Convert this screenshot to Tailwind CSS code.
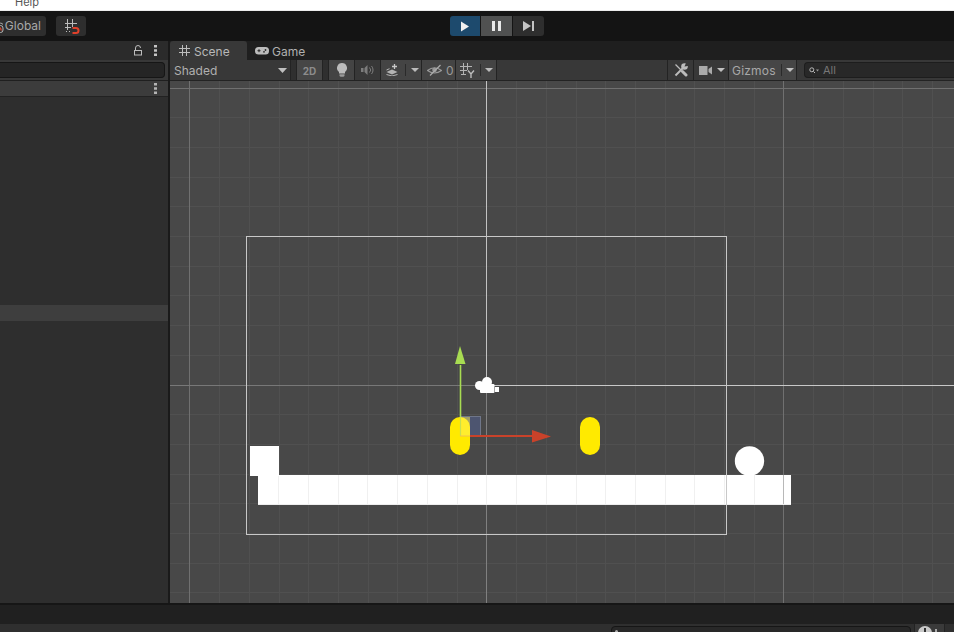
<!DOCTYPE html>
<html>
<head>
<meta charset="utf-8">
<script src="https://cdn.jsdelivr.net/npm/@tailwindcss/browser@4"></script>
</head>
<body class="bg-[#1a1a1a]">
<div class="w-[954px] h-[632px] overflow-hidden flex flex-col font-['Inter','Liberation_Sans',sans-serif] text-[12px] text-[#b4b4b4]">
  <!-- menu -->
  <div class="h-[11px] shrink-0 bg-white border-b border-[#ececec] overflow-hidden relative pl-[15px]">
    <span class="block -mt-[5px] text-[11px] leading-[14px] text-[#555]">Help</span>
  </div>
  <!-- main toolbar -->
  <div class="h-[30px] shrink-0 bg-[#141414] relative flex items-center">
    <div class="w-[46px] h-[20px] bg-[#2e2e2e] rounded-r-[3px] flex items-center justify-end pr-[5px] text-[#a8a8a8] gap-[1px] overflow-hidden">
      <svg width="6" height="13" viewBox="0 0 6 13" class="shrink-0"><path d="M0 4.500a3 3 0 0 1 5 0M0 8a2.500 2.500 0 0 1 5 0v2a2.500 2.500 0 0 1-5 0" fill="none" stroke="#b4b4b4" stroke-width="1"/><path d="M0 7.500a2.500 2.500 0 0 1 3 3" fill="none" stroke="#d8452c" stroke-width="1.400"/></svg>
      <span>Global</span>
    </div>
    <div class="ml-[10px] w-[30px] h-[20px] bg-[#2e2e2e] rounded-[3px] flex items-center justify-center">
      <svg width="18" height="16" viewBox="0 0 18 16" fill="none"><path d="M5.500 1v11M10.500 1v8M3 5.500h12M3 9.500h6" stroke="#bcbcbc" stroke-width="1"/><path d="M4 13.500h1M7 13.500h1" stroke="#bcbcbc"/><path d="M10.500 10h3.500a2.500 2.500 0 0 1 0 5h-3.500" stroke="#e0402a" stroke-width="2"/></svg>
    </div>
    <div class="absolute left-[450px] top-[5px] flex gap-[1px] h-[20px]">
      <div class="w-[30px] bg-[#1d4a6d] rounded-l-[3px] flex items-center justify-center">
        <svg width="10" height="11" viewBox="0 0 10 11"><path d="M1 .5 9 5.500 1 10.500z" fill="#f0f0f0"/></svg>
      </div>
      <div class="w-[31px] bg-[#505151] flex items-center justify-center">
        <svg width="9" height="10" viewBox="0 0 9 10"><path d="M0 0h3v10H0zM6 0h3v10H6z" fill="#e8e8e8"/></svg>
      </div>
      <div class="w-[31px] bg-[#2e2e2e] rounded-r-[3px] flex items-center justify-center">
        <svg width="11" height="10" viewBox="0 0 11 10"><path d="M0 0 8 5 0 10z" fill="#c4c4c4"/><path d="M9 0h2v10H9z" fill="#c4c4c4"/></svg>
      </div>
    </div>
  </div>
  <!-- panels -->
  <div class="h-[562px] shrink-0 flex bg-[#1a1a1a]">
    <!-- left panel -->
    <div class="w-[168px] shrink-0 flex flex-col bg-[#2e2e2e]">
      <div class="h-[19px] shrink-0 bg-[#2b2b2b] flex items-center justify-end gap-[11px] pr-[11px]">
        <svg width="10" height="11" viewBox="0 0 10 11" fill="none"><path d="M2.500 5V3a2.500 2.500 0 0 1 5 0" stroke="#bdbdbd"/><rect x="1.500" y="5.500" width="7" height="4.500" stroke="#bdbdbd"/></svg>
        <svg width="3" height="11" viewBox="0 0 3 11"><path d="M0 0h3v2.500H0zM0 4.200h3v2.500H0zM0 8.500h3V11H0z" fill="#c4c4c4"/></svg>
      </div>
      <div class="h-[21px] shrink-0 bg-[#383838] flex items-center pr-[3px] border-b border-[#1f1f1f]">
        <div class="w-full h-[16px] bg-[#252525] border border-[#161616] rounded-r-[4px] border-l-0"></div>
      </div>
      <div class="h-[16px] shrink-0 bg-[#3c3c3c] border-b border-[#222] flex items-center justify-end pr-[11px]">
        <svg width="3" height="11" viewBox="0 0 3 11"><path d="M0 0h3v2.500H0zM0 4.200h3v2.500H0zM0 8.500h3V11H0z" fill="#b4b4b4"/></svg>
      </div>
      <div class="h-[208px] shrink-0 bg-[#2e2e2e]"></div>
      <div class="h-[16px] shrink-0 bg-[#3e3e3e]"></div>
      <div class="flex-1 bg-[#2e2e2e]"></div>
    </div>
    <!-- scene panel -->
    <div class="ml-[2px] flex-1 flex flex-col min-w-0">
      <div class="h-[19px] shrink-0 bg-[#1f1f1f] flex items-end">
        <div class="w-[77px] h-[19px] bg-[#383838] rounded-t-[3px] flex items-center pl-[9px] gap-[4px] text-[#b8b8b8]">
          <svg width="11" height="11" viewBox="0 0 11 11" fill="none"><path d="M3.500 0v11M7.500 0v11M0 3.500h11M0 7.500h11" stroke="#bdbdbd"/></svg>
          <span class="mt-[2px]">Scene</span>
        </div>
        <div class="h-[19px] flex items-center pl-[8px] gap-[3px] text-[#b0b0b0]">
          <svg width="14" height="8" viewBox="0 0 14 8"><rect width="14" height="7.500" rx="3.500" fill="#bcbcbc"/><path d="M2.500 3.700h3M4 2.200v3" stroke="#2a2a2a"/><circle cx="10.500" cy="3" r=".9" fill="#2a2a2a"/><circle cx="9" cy="4.800" r=".9" fill="#2a2a2a"/></svg>
          <span class="mt-[2px]">Game</span>
        </div>
      </div>
      <!-- scene toolbar -->
      <div class="h-[21px] shrink-0 bg-[#383838] border-b border-[#232323] flex items-stretch">
        <div class="w-[120px] flex items-center justify-between pl-[4px] pr-[2px] text-[#b0b0b0]">
          <span class="mt-[2px]">Shaded</span>
          <svg width="9" height="5" viewBox="0 0 9 5" class="mr-[1px]"><path d="M0 0h9L4.500 5z" fill="#c0c0c0"/></svg>
        </div>
        <div class="w-[1px] bg-[#232323]"></div>
        <div class="w-[5px] bg-[#2f2f2f]"></div>
        <div class="w-[1px] bg-[#232323]"></div>
        <div class="w-[25px] bg-[#464646] flex items-center justify-center text-[10px] font-bold text-[#8c8c8c]"><span class="mt-[2px]">2D</span></div>
        <div class="w-[1px] bg-[#232323]"></div>
        <div class="w-[5px] bg-[#2f2f2f]"></div>
        <div class="w-[1px] bg-[#232323]"></div>
        <div class="w-[25px] bg-[#444] flex items-center justify-center">
          <svg width="10" height="14" viewBox="0 0 10 14"><path d="M5 0a5 5 0 0 1 3 9v1.500H2V9a5 5 0 0 1 3-9z" fill="#bbb"/><path d="M2.500 11.200h5v1a1.500 1.500 0 0 1-1.500 1.500H4a1.500 1.500 0 0 1-1.500-1.500z" fill="#999"/></svg>
        </div>
        <div class="w-[1px] bg-[#232323]"></div>
        <div class="w-[25px] bg-[#383838] flex items-center justify-center">
          <svg width="13" height="10" viewBox="0 0 13 10"><path d="M0 3h2.500v4H0zM3.500 3 6.500 0v10L3.500 7z" fill="#7c7c7c"/><path d="M8.500 2.500a3.500 3.500 0 0 1 0 5M10.500 1a6 6 0 0 1 0 8" stroke="#7c7c7c" fill="none"/></svg>
        </div>
        <div class="w-[1px] bg-[#232323]"></div>
        <div class="w-[40px] bg-[#444] flex items-center pl-[5px] gap-[6px]">
          <svg width="13" height="12" viewBox="0 0 13 12" fill="none"><path d="M.5 8 6 5.500 11.500 8 6 10.500z" fill="#b4b4b4"/><path d="M.5 6 3.500 4.700M.5 10.500 6 12l5.500-1.500" stroke="#b4b4b4"/><path d="M8.500 0v5M6 2.500h5" stroke="#c8c8c8" stroke-width="1.300"/></svg>
          <div class="w-[1px] h-[12px] bg-[#2a2a2a]"></div>
          <svg width="8" height="4" viewBox="0 0 8 4" class="-ml-[1px]"><path d="M0 0h8L4 4z" fill="#bbb"/></svg>
        </div>
        <div class="w-[1px] bg-[#232323]"></div>
        <div class="w-[33px] bg-[#444] flex items-center pl-[5px] gap-[4px] text-[#9a9a9a]">
          <svg width="15" height="12" viewBox="0 0 15 12" fill="none"><path d="M.5 6.500Q7.500 1 14.500 6.500 7.500 11.500.5 6.500z" stroke="#999" stroke-width="1.200"/><circle cx="7.500" cy="6" r="2.300" fill="#999"/><path d="M3 11.500 13.500 1" stroke="#aaa" stroke-width="1.200"/></svg>
          <span class="mt-[2px]">0</span>
        </div>
        <div class="w-[1px] bg-[#232323]"></div>
        <div class="w-[40px] bg-[#444] flex items-center pl-[4px] gap-[5px]">
          <svg width="15" height="15" viewBox="0 0 15 15" fill="none"><path d="M3.500 0v12M7.500 0v7M0 3.500h12M0 7.500h7" stroke="#b4b4b4"/><path d="M1 11.500h5" stroke="#b4b4b4"/><path d="M8 7.500l3 3.500 3-3.500M11 11v4" stroke="#bdbdbd" stroke-width="1.400"/></svg>
          <div class="w-[1px] h-[12px] bg-[#2a2a2a]"></div>
          <svg width="8" height="4" viewBox="0 0 8 4" class="-ml-[1px]"><path d="M0 0h8L4 4z" fill="#bbb"/></svg>
        </div>
        <div class="w-[1px] bg-[#232323]"></div>
        <div class="flex-1 min-w-0"></div>
        <div class="w-[1px] bg-[#232323]"></div>
        <div class="w-[25px] flex items-center justify-center">
          <svg width="14" height="14" viewBox="0 0 14 14" fill="none"><path d="M1.500 12.500 8.500 5.500" stroke="#bcbcbc" stroke-width="2"/><circle cx="10.500" cy="3.500" r="3.300" fill="#bcbcbc"/><path d="M10.500 3.500 12 0h3v3z" fill="#383838"/><path d="M1.500 1.500l5.500 5.500" stroke="#bcbcbc" stroke-width="1.200"/><path d="M8.500 8.500l3.500 3.500" stroke="#bcbcbc" stroke-width="3" stroke-linecap="round"/></svg>
        </div>
        <div class="w-[1px] bg-[#232323]"></div>
        <div class="w-[34px] flex items-center pl-[5px] gap-[5px]">
          <svg width="13" height="9" viewBox="0 0 13 9"><rect width="8.500" height="9" fill="#aaa"/><path d="M9.500 3 13 .5v8L9.500 6z" fill="#aaa"/></svg>
          <svg width="8" height="4" viewBox="0 0 8 4"><path d="M0 0h8L4 4z" fill="#c0c0c0"/></svg>
        </div>
        <div class="w-[1px] bg-[#232323]"></div>
        <div class="w-[67px] bg-[#464646] flex items-center pl-[3px] text-[#a8a8a8] tracking-[0.2px]">
          <span class="w-[49px] mt-[2px]">Gizmos</span>
          <div class="w-[1px] h-[12px] bg-[#2a2a2a]"></div>
          <svg width="8" height="4" viewBox="0 0 8 4" class="ml-[4px]"><path d="M0 0h8L4 4z" fill="#c0c0c0"/></svg>
        </div>
        <div class="w-[1px] bg-[#232323]"></div>
        <div class="flex-1 min-w-0 max-w-[7px]"></div>
        <div class="w-[150px] flex items-center">
          <div class="w-full h-[16px] bg-[#282828] border border-[#1d1d1d] border-r-0 rounded-l-[4px] flex items-center pl-[4px] gap-[4px] text-[11px] text-[#777]">
            <svg width="10" height="7" viewBox="0 0 10 7" fill="none"><circle cx="2.800" cy="2.800" r="2" stroke="#bbb"/><path d="m4.500 4.500 1.500 1.500" stroke="#bbb"/><path d="M7 2.500h3L8.500 4.500z" fill="#999"/></svg>
            <span>All</span>
          </div>
        </div>
      </div>
      <!-- scene canvas -->
      <svg class="block h-[522px] w-[784px] shrink-0" viewBox="170 81 784 522" shape-rendering="crispEdges">
        <rect x="170" y="81" width="784" height="522" fill="#484848"/>
        <g stroke="#505050" stroke-width="1">
          <path d="M219.500 81v522M249.500 81v522M279.500 81v522M308.500 81v522M338.500 81v522M368.500 81v522M397.500 81v522M427.500 81v522M457.500 81v522M516.500 81v522M546.500 81v522M576.500 81v522M605.500 81v522M635.500 81v522M665.500 81v522M694.500 81v522M724.500 81v522M754.500 81v522M813.500 81v522M843.500 81v522M873.500 81v522M902.500 81v522M932.500 81v522"/>
          <path d="M170 117.500h784M170 147.500h784M170 177.500h784M170 206.500h784M170 236.500h784M170 266.500h784M170 295.500h784M170 325.500h784M170 355.500h784M170 414.500h784M170 444.500h784M170 474.500h784M170 503.500h784M170 533.500h784M170 563.500h784M170 592.500h784"/>
        </g>
        <g stroke="#707070" stroke-width="1">
          <path d="M189.500 81v522M783.500 81v522"/>
          <path d="M170 88.500h784"/>
        </g>
        <path d="M486.500 81v304" stroke="#c2c2c2"/>
        <path d="M486.500 385v218" stroke="#808080"/>
        <path d="M170 385.500h316" stroke="#787878"/>
        <path d="M486 385.500h468" stroke="#c8c8c8"/>
        <!-- ground -->
        <rect x="258" y="475" width="533" height="30" fill="#fff"/>
        <path d="M278.500 475v30M308.500 475v30M338.500 475v30M367.500 475v30M397.500 475v30M427.500 475v30M457.500 475v30M486.500 475v30M516.500 475v30M546.500 475v30M576.500 475v30M605.500 475v30M635.500 475v30M665.500 475v30M694.500 475v30M724.500 475v30M754.500 475v30" stroke="#f0f0f0"/>
        <path d="M783.500 475v30" stroke="#b8b8b8"/>
        <path d="M258 504.500h533" stroke="#eee"/>
        <rect x="250" y="446" width="29" height="30" fill="#fff"/>
        <!-- camera frame -->
        <rect x="246.500" y="236.500" width="480" height="298" fill="none" stroke="#c8c8c8"/>
        <g shape-rendering="auto">
          <circle cx="749.500" cy="461" r="14.700" fill="#fff"/>
          <!-- selection square -->
          <rect x="460.500" y="416.500" width="20" height="20" fill="#4d5570" stroke="#6f7689" shape-rendering="crispEdges"/>
          <!-- capsules -->
          <rect x="450" y="417" width="20" height="38" rx="10" fill="#ffea00"/>
          <rect x="580" y="417" width="20" height="38" rx="10" fill="#ffea00"/>
          <path d="M461 417h9v19h-9z" fill="#ffef5a" opacity=".5"/>
          <!-- gizmo -->
          <path d="M460.500 365v52" stroke="#a8dc52" stroke-width="1.600"/>
          <path d="M460.500 417v19" stroke="#c8e050" stroke-width="1.200"/>
          <path d="M460 346 465.500 364H455z" fill="#a8dc52"/>
          <path d="M470 436h63" stroke="#c9422a" stroke-width="2"/>
          <path d="M460 436h10" stroke="#f0c050" stroke-width="1"/>
          <path d="M532 430 551 436.500 532 442.500z" fill="#c9422a"/>
          <!-- camera icon -->
          <circle cx="479.500" cy="385.500" r="4.500" fill="#fff"/>
          <circle cx="487" cy="382" r="5" fill="#fff"/>
          <rect x="480" y="384" width="14.500" height="9" rx="1" fill="#fff"/>
          <path d="M495 387h4v5h-4z" fill="#fff"/>
        </g>
      </svg>
    </div>
  </div>
  <!-- bottom -->
  <div class="h-[21px] shrink-0 bg-[#202020] border-t-2 border-[#161616]"></div>
  <div class="flex-1 bg-[#2f2f2f] relative min-h-0 overflow-hidden">
    <div class="absolute left-[611px] top-[2px] w-[300px] h-[16px] bg-[#282828] border border-[#161616] rounded-[4px] pl-[2px]">
      <span class="block w-[3px] h-[3px] mt-[3px] ml-[1px] rounded-full bg-[#aaa]"></span>
    </div>
    <div class="absolute left-[914px] top-0 w-[31px] h-[8px] overflow-hidden border-x border-[#232323] flex pl-[3px] gap-[3px] bg-[#3a3a3a]">
      <span class="flex justify-center shrink-0 w-[14px] h-[14px] rounded-full bg-[#c8c8c8] mt-[2px]"><span class="block w-[2px] h-[5px] mt-[2px] bg-[#333]"></span></span>
      <span class="block w-[2px] h-[3px] mt-[5px] bg-[#aaa]"></span>
    </div>
  </div>
</div>
</body>
</html>
